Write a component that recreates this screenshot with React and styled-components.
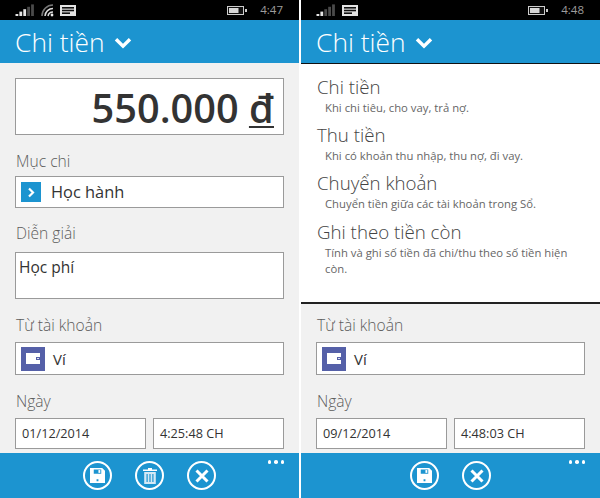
import React from "react";
import styled, { createGlobalStyle } from "styled-components";

const GlobalStyle = createGlobalStyle`
  html, body {
    margin: 0;
    padding: 0;
    background: #fff;
  }
  body {
    font-family: "Open Sans", "Noto Sans", sans-serif;
  }
`;

const Signal = ({ bars }) => (
  <svg width="20" height="12" viewBox="0 0 20 12">
    {[0, 1, 2, 3, 4].map((i) => (
      <rect
        key={i}
        x={i * 3.9 + 0.5}
        y={10 - i * 2.4}
        width="2.8"
        height={2 + i * 2.4}
        fill={i < bars ? "#e6e6e6" : "#4a4a4a"}
      />
    ))}
  </svg>
);

const Wifi = () => (
  <svg width="13" height="13" viewBox="0 0 13 13" fill="none">
    <path d="M1 12A11 11 0 0 1 12 1" stroke="#777" strokeWidth="1.6" />
    <path d="M4 12A8 8 0 0 1 12 4.5" stroke="#ddd" strokeWidth="1.5" />
    <path d="M7 12A5 5 0 0 1 12 8" stroke="#ddd" strokeWidth="1.5" />
    <circle cx="11" cy="11" r="1.4" fill="#eee" />
  </svg>
);

const Message = () => (
  <svg width="16" height="11" viewBox="0 0 16 11">
    <rect width="16" height="11" fill="#e4e4e4" />
    <rect x="2" y="2" width="12" height="1.6" fill="#111" />
    <rect x="2" y="4.7" width="12" height="1.6" fill="#111" />
    <rect x="2" y="7.4" width="8" height="1.6" fill="#111" />
  </svg>
);

const Battery = () => (
  <svg width="20" height="9" viewBox="0 0 20 9">
    <rect x="0.5" y="0.5" width="16" height="8" fill="#111" stroke="#ccc" />
    <rect x="2" y="2" width="9.5" height="5" fill="#d8d8d8" />
    <rect x="18" y="3" width="2" height="3" fill="#ccc" />
  </svg>
);

const Chevron = () => (
  <svg width="18" height="12" viewBox="0 0 18 12" fill="none">
    <path d="M2 2.2l7 7 7-7" stroke="#fff" strokeWidth="3.4" />
  </svg>
);

const SaveIcon = () => (
  <svg width="15" height="15" viewBox="0 0 16 16">
    <path
      fill="#fff"
      fillRule="evenodd"
      d="M0 0h13l3 3v13H0zM4 1.5V6h8V1.5zM7 12h2v2H7z"
    />
    <rect x="9" y="2.2" width="2" height="3" fill="#fff" />
  </svg>
);

const TrashIcon = () => (
  <svg width="14" height="16" viewBox="0 0 14 16">
    <path fill="#fff" d="M5 0h4v1.5h5V3H0V1.5h5z" />
    <path
      fill="#d5e9f5"
      fillRule="evenodd"
      d="M1.2 4h11.6v12H1.2zM3.5 6v8h1.2V6zM6.4 6v8h1.2V6zM9.3 6v8h1.2V6z"
    />
  </svg>
);

const CloseIcon = () => (
  <svg width="14" height="14" viewBox="0 0 14 14" fill="none">
    <path d="M1.5 1.5l11 11M12.5 1.5l-11 11" stroke="#fff" strokeWidth="3" />
  </svg>
);

const CategoryIcon = () => (
  <svg width="11" height="11" viewBox="0 0 11 11" fill="none">
    <path d="M3 1.5l4 4-4 4" stroke="#fff" strokeWidth="2.2" />
  </svg>
);

const WalletIcon = () => (
  <svg width="14" height="11" viewBox="0 0 14 11">
    <path fill="#fff" fillRule="evenodd" d="M0 0h14v11H0zM10 4v3h4V4z" />
    <rect x="11" y="5" width="2" height="1" fill="#dfe2f0" />
  </svg>
);

const Page = styled.div`
  display: flex;
  justify-content: space-between;
  width: 600px;
  height: 498px;
  overflow: hidden;
`;

const Phone = styled.div`
  display: flex;
  flex-direction: column;
  width: 299px;
  height: 498px;
  background: #f1f1f1;
`;

const StatusBar = styled.div`
  display: flex;
  align-items: center;
  flex: none;
  height: 20px;
  padding: 0 16px 0 15px;
  background: #000;
`;

const StatusLeft = styled.div`
  display: flex;
  align-items: center;
  gap: 6px;
  flex: 1;
`;

const Clock = styled.span`
  margin-left: 13px;
  color: #9c9c9c;
  font-size: 11.5px;
  line-height: 20px;
`;

const Header = styled.div`
  display: flex;
  align-items: center;
  gap: 9px;
  flex: none;
  box-sizing: border-box;
  height: 43px;
  padding: 2px 0 0 15px;
  background: #1c94d0;
  color: #fff;
`;

const HeaderTitle = styled.h1`
  margin: 0;
  font-size: 26.4px;
  font-weight: 300;
  line-height: 41px;
`;

const Content = styled.div`
  display: flex;
  flex-direction: column;
  flex: 1;
  min-height: 0;
  padding: ${({ $top }) => $top}px 15px 0 15px;
`;

const AmountBox = styled.div`
  height: 55px;
  padding-right: 9px;
  border: 1px solid #9a9a9a;
  background: #fff;
  color: #333;
  font-size: 39.7px;
  font-weight: 600;
  line-height: 59px;
  text-align: right;
`;

const Dong = styled.span`
  text-decoration: underline;
  text-underline-offset: 3px;
  text-decoration-thickness: 2px;
`;

const Label = styled.div`
  margin: ${({ $top }) => $top}px 0 ${({ $bottom }) => $bottom}px 1px;
  color: #5c5c5c;
  font-size: 15.6px;
  font-weight: 300;
  line-height: 20px;
`;

const Field = styled.div`
  display: flex;
  align-items: center;
  height: ${({ $height }) => $height}px;
  padding-left: 5px;
  border: 1px solid #9a9a9a;
  background: #fff;
  color: #333;
  font-size: ${({ $size }) => $size}px;
  line-height: 32px;
`;

const IconTile = styled.span`
  display: flex;
  align-items: center;
  justify-content: center;
  flex: none;
  width: ${({ $size }) => $size}px;
  height: ${({ $size }) => $size}px;
  margin-right: ${({ $gap }) => $gap}px;
  background: ${({ $color }) => $color};
`;

const NoteBox = styled.div`
  height: 38px;
  padding: 4px 0 3px 3px;
  border: 1px solid #9a9a9a;
  background: #fff;
  color: #333;
  font-size: 15.5px;
  line-height: 20px;
`;

const DateRow = styled.div`
  display: grid;
  grid-template-columns: 1fr 1fr;
  gap: 7px;
`;

const DateField = styled.div`
  height: 29px;
  padding-left: 6px;
  border: 1px solid #9a9a9a;
  background: #fff;
  color: #333;
  font-size: 12.7px;
  line-height: 29px;
`;

const AppBar = styled.div`
  position: relative;
  display: flex;
  justify-content: center;
  gap: 23px;
  flex: none;
  height: 45px;
  padding-top: 8px;
  box-sizing: border-box;
  background: #1c94d0;
`;

const RoundButton = styled.div`
  display: flex;
  align-items: center;
  justify-content: center;
  box-sizing: border-box;
  width: 29px;
  height: 29px;
  border: 2px solid #fff;
  border-radius: 50%;
`;

const MoreDots = styled.div`
  position: absolute;
  top: 7px;
  right: 15px;
  display: flex;
  gap: 3px;
`;

const Dot = styled.span`
  width: 3.5px;
  height: 3.5px;
  border-radius: 50%;
  background: #fff;
`;

const Dropdown = styled.div`
  flex: none;
  box-sizing: border-box;
  height: 241px;
  padding: 8.5px 16px 0;
  border-top: 1px solid #111;
  border-bottom: 2px solid #222;
  background: #fff;
`;

const Option = styled.div`
  margin-bottom: 5.4px;
`;

const OptionTitle = styled.div`
  color: #444;
  font-size: 18.7px;
  font-weight: 300;
  line-height: 27px;
`;

const OptionText = styled.div`
  padding-left: 8px;
  color: #666;
  font-size: 11.3px;
  line-height: 16px;
`;

const options = [
  ["Chi tiền", "Khi chi tiêu, cho vay, trả nợ."],
  ["Thu tiền", "Khi có khoản thu nhập, thu nợ, đi vay."],
  ["Chuyển khoản", "Chuyển tiền giữa các tài khoản trong Sổ."],
  ["Ghi theo tiền còn", "Tính và ghi số tiền đã chi/thu theo số tiền hiện còn."],
];

const Top = ({ time, wifi, bars }) => (
  <>
    <StatusBar>
      <StatusLeft>
        <Signal bars={bars} />
        {wifi && <Wifi />}
        <Message />
      </StatusLeft>
      <Battery />
      <Clock>{time}</Clock>
    </StatusBar>
    <Header>
      <HeaderTitle>Chi tiền</HeaderTitle>
      <Chevron />
    </Header>
  </>
);

const Account = ({ top }) => (
  <>
    <Label $top={top} $bottom={7}>Từ tài khoản</Label>
    <Field $height={31} $size={15}>
      <IconTile $size={24} $color="#5560a8" $gap={8}>
        <WalletIcon />
      </IconTile>
      Ví
    </Field>
  </>
);

const DateTime = ({ date, time }) => (
  <>
    <Label $top={16} $bottom={7}>Ngày</Label>
    <DateRow>
      <DateField>{date}</DateField>
      <DateField>{time}</DateField>
    </DateRow>
  </>
);

const Bottom = ({ trash }) => (
  <AppBar>
    <RoundButton><SaveIcon /></RoundButton>
    {trash && <RoundButton><TrashIcon /></RoundButton>}
    <RoundButton><CloseIcon /></RoundButton>
    <MoreDots><Dot /><Dot /><Dot /></MoreDots>
  </AppBar>
);

const App = () => (
  <Page>
    <GlobalStyle />
    <Phone>
      <Top time="4:47" wifi bars={3} />
      <Content $top={15}>
        <AmountBox>550.000 <Dong>đ</Dong></AmountBox>
        <Label $top={16} $bottom={5}>Mục chi</Label>
        <Field $height={30} $size={16.4}>
          <IconTile $size={20} $color="#1c94d0" $gap={10}>
            <CategoryIcon />
          </IconTile>
          Học hành
        </Field>
        <Label $top={15} $bottom={9}>Diễn giải</Label>
        <NoteBox>Học phí</NoteBox>
        <Account top={16} />
        <DateTime date="01/12/2014" time="4:25:48 CH" />
      </Content>
      <Bottom trash />
    </Phone>
    <Phone>
      <Top time="4:48" bars={2} />
      <Dropdown>
        {options.map(([title, text]) => (
          <Option key={title}>
            <OptionTitle>{title}</OptionTitle>
            <OptionText>{text}</OptionText>
          </Option>
        ))}
      </Dropdown>
      <Content $top={0}>
        <Account top={11} />
        <DateTime date="09/12/2014" time="4:48:03 CH" />
      </Content>
      <Bottom />
    </Phone>
  </Page>
);

export default App;
